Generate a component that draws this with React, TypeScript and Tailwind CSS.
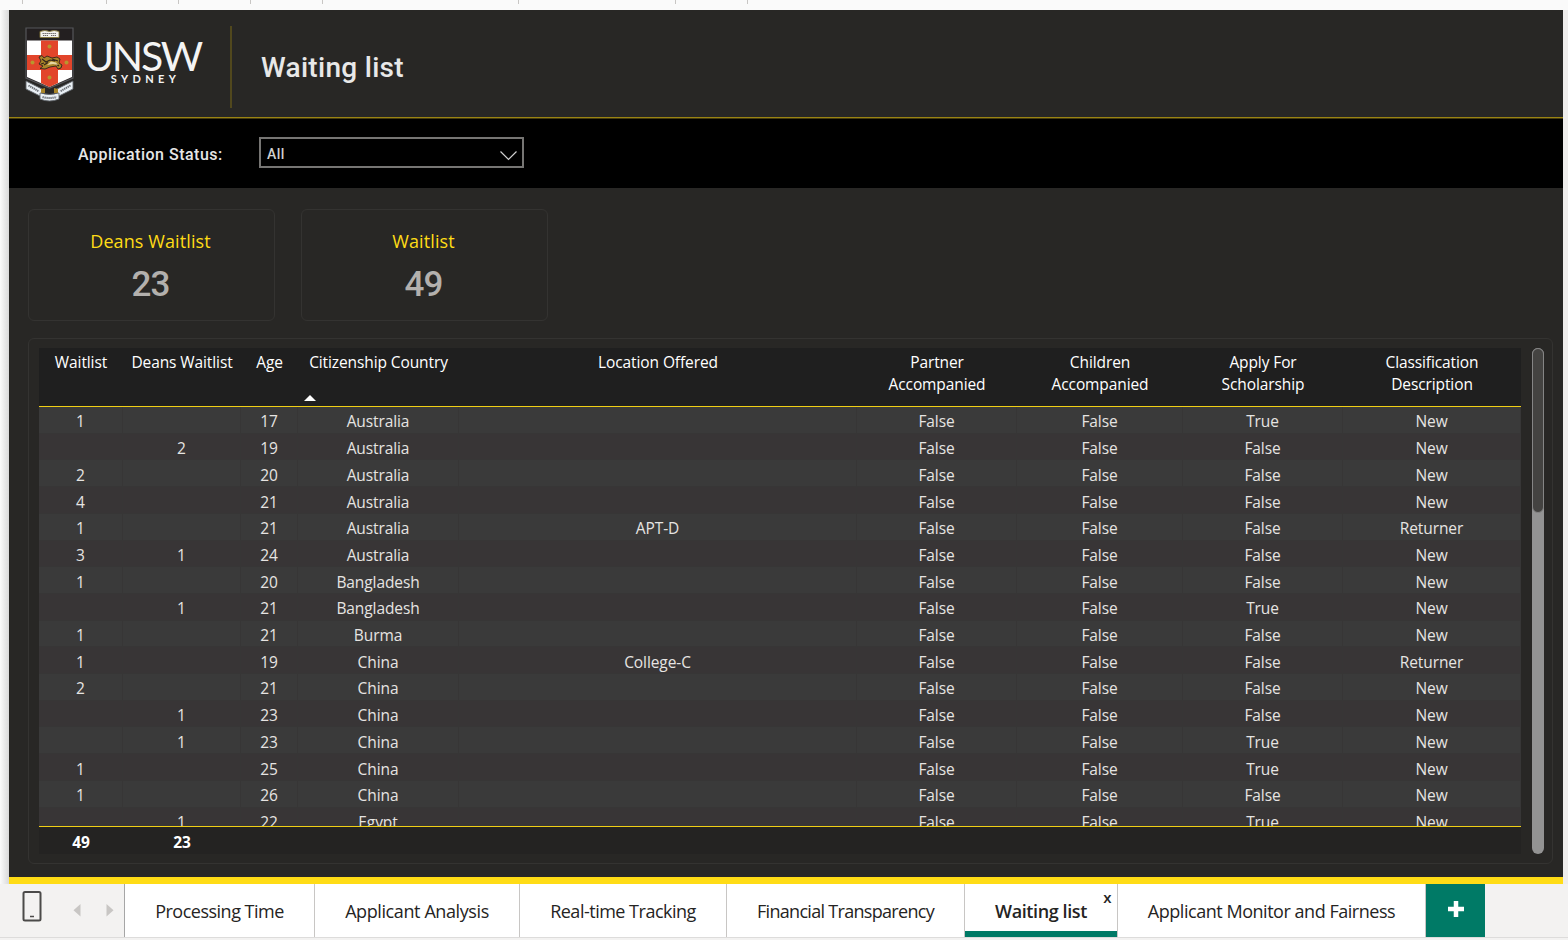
import React from "react";

const columns = [
  { title: "Waitlist", w: "w-[84px]" },
  { title: "Deans Waitlist", w: "w-[118px]" },
  { title: "Age", w: "w-[57px]" },
  { title: "Citizenship Country", w: "w-[161px]", sorted: true },
  { title: "Location Offered", w: "w-[398px]" },
  { title: "Partner\nAccompanied", w: "w-[160px]" },
  { title: "Children\nAccompanied", w: "w-[166px]" },
  { title: "Apply For\nScholarship", w: "w-[160px]" },
  { title: "Classification\nDescription", w: "w-[178px]" },
];

const rows = [
  ["1", "", "17", "Australia", "", "False", "False", "True", "New"],
  ["", "2", "19", "Australia", "", "False", "False", "False", "New"],
  ["2", "", "20", "Australia", "", "False", "False", "False", "New"],
  ["4", "", "21", "Australia", "", "False", "False", "False", "New"],
  ["1", "", "21", "Australia", "APT-D", "False", "False", "False", "Returner"],
  ["3", "1", "24", "Australia", "", "False", "False", "False", "New"],
  ["1", "", "20", "Bangladesh", "", "False", "False", "False", "New"],
  ["", "1", "21", "Bangladesh", "", "False", "False", "True", "New"],
  ["1", "", "21", "Burma", "", "False", "False", "False", "New"],
  ["1", "", "19", "China", "College-C", "False", "False", "False", "Returner"],
  ["2", "", "21", "China", "", "False", "False", "False", "New"],
  ["", "1", "23", "China", "", "False", "False", "False", "New"],
  ["", "1", "23", "China", "", "False", "False", "True", "New"],
  ["1", "", "25", "China", "", "False", "False", "True", "New"],
  ["1", "", "26", "China", "", "False", "False", "False", "New"],
  ["", "1", "22", "Egypt", "", "False", "False", "True", "New"],
];

const tabs = [
  { label: "Processing Time", w: "w-[190px]", track: "tracking-[-0.5px]" },
  { label: "Applicant Analysis", w: "w-[205px]", track: "tracking-[-0.4px]" },
  { label: "Real-time Tracking", w: "w-[207px]", track: "tracking-[-0.5px]" },
  { label: "Financial Transparency", w: "w-[238px]", track: "tracking-[-0.7px]" },
  { label: "Waiting list", w: "w-[153px]", track: "tracking-[-0.4px]", active: true },
  { label: "Applicant Monitor and Fairness", w: "w-[308px]", track: "tracking-[-0.47px]" },
];

function Crest() {
  return (
    <svg width="50" height="76" viewBox="0 0 50 76" className="shrink-0">
      <path d="M1 1H48V51L24.5 61L1 51Z" fill="#231f20" stroke="#55565a" strokeWidth="1.2" />
      <path d="M2 13.5H47V50L24.5 60L2 50Z" fill="#fff" />
      <path d="M16 13.5H33V56L24.5 60L16 56Z" fill="#e2452b" />
      <path d="M2 28H47V43H2Z" fill="#e2452b" />
      <path d="M15 4.5Q20 2.5 24.5 4.5Q29 2.5 34 4.5V10.5H15Z" fill="#f3f1ec" stroke="#857638" strokeWidth="0.9" />
      <path d="M17.5 6.5H31.5M18 8.5H23M26 8.5H31" stroke="#5b5858" strokeWidth="0.9" strokeDasharray="1.4 0.6" fill="none" />
      <g fill="#b8962e">
        <circle cx="24.5" cy="19.5" r="2" />
        <circle cx="7.5" cy="35.5" r="2" />
        <circle cx="41.5" cy="35.5" r="2" />
        <circle cx="24.5" cy="50.5" r="2" />
      </g>
      <path
        d="M14 30L17 28.5L19 31L22 29L27 31L32 30L35 32L34 36L37 38L36 41L33 42L31 39L25 40L20 42L15 41.5L18 39L14 37L16 34Z"
        fill="#a98528"
        stroke="#30241c"
        strokeWidth="0.9"
      />
      <path d="M17 32L21 35L25 33L30 34M19 38L23 35.5M27 32L33 34M16 37L19 36M31 37L34 39" stroke="#30241c" strokeWidth="1.1" fill="none" />
      <path d="M22 38L26 34.5L31 35.5L33 38L28 37Z" fill="#e6d6a2" />
      <path d="M1 54L17 62V70L1 62Z" fill="#e9eff4" stroke="#60646a" strokeWidth="0.9" />
      <path d="M48 54L32 62V70L48 62Z" fill="#e9eff4" stroke="#60646a" strokeWidth="0.9" />
      <path d="M16 62L20 61V66H16ZM33 62L29 61V66H33Z" fill="#a98528" />
      <path d="M15 66Q24.5 69 34 66V72Q24.5 76 15 72Z" fill="#e9eff4" stroke="#60646a" strokeWidth="0.9" />
      <path d="M3.5 58.5L14 64.5M45.5 58.5L35 64.5M17.5 70Q24.5 72 31.5 70" stroke="#6a6e74" strokeWidth="2" strokeDasharray="1.3 0.7" fill="none" />
    </svg>
  );
}

function MetricCard({ title, value }: { title: string; value: string }) {
  return (
    <section className="flex h-[112px] w-[247px] flex-col items-center rounded-md border border-[#343331] pt-[17px] pr-[2px]">
      <h2 className="text-[18px] leading-7 tracking-[0.1px] text-[#ffdc16]">{title}</h2>
      <p className="mt-[9px] font-[Roboto,sans-serif] text-[35px] leading-[42px] font-medium tracking-[-0.8px] text-[#b3b0ad]">{value}</p>
    </section>
  );
}

function WaitlistTable() {
  return (
    <div className="flex h-[506px] w-[1482px] flex-col text-[15.5px] tracking-[-0.1px]">
      <div className="flex h-[58px] shrink-0 bg-[#1f1f1f] text-white">
        {columns.map((c) => (
          <div key={c.title} className={`${c.w} flex shrink-0 flex-col items-center pt-[3px]`}>
            <span className="text-center leading-[22px] whitespace-pre">{c.title}</span>
            {c.sorted && (
              <svg width="12" height="6" className="mt-[22px] ml-[6px] self-start">
                <path d="M0 6L6 0L12 6Z" fill="#fff" />
              </svg>
            )}
          </div>
        ))}
      </div>
      <div className="h-px shrink-0 bg-[#f0cf15]" />
      <div className="h-[419px] shrink-0 overflow-hidden text-[#e6e4e2]">
        {rows.map((row, i) => (
          <div key={i} className="flex h-[26.71px] odd:bg-[#3a3a3a] even:bg-[#383536]">
            {row.map((cell, j) => (
              <div
                key={j}
                className={`${columns[j].w} shrink-0 border-r border-b border-[#373636] pt-[1.4px] text-center leading-[27px]`}
              >
                {cell}
              </div>
            ))}
          </div>
        ))}
      </div>
      <div className="h-px shrink-0 bg-[#f0cf15]" />
      <div className="flex h-[27px] shrink-0 bg-[#242322] text-center leading-[30px] font-bold text-white">
        <div className="w-[84px]">49</div>
        <div className="w-[118px]">23</div>
      </div>
    </div>
  );
}

function PageTabs() {
  return (
    <nav className="flex h-[54px] shrink-0 border-b border-[#dddcdb] bg-[#f3f2f1]">
      <div className="flex h-[53px] w-[125px] border-r border-[#a6a6a6]">
        <svg width="124" height="53">
          <rect x="23.5" y="8" width="17" height="28.5" rx="1.5" fill="none" stroke="#4b4a49" strokeWidth="2" />
          <path d="M30 32.5H34" stroke="#4b4a49" strokeWidth="1.5" />
          <path d="M80.5 20V32.5L73.5 26.25Z" fill="#c8c6c4" />
          <path d="M106.5 20V32.5L113.5 26.25Z" fill="#c8c6c4" />
        </svg>
      </div>
      {tabs.map((t) => (
        <div
          key={t.label}
          className={`${t.w} ${t.track} relative flex h-[53px] items-center justify-center border-r border-[#c8c6c4] bg-white pt-[2px] text-[18px] whitespace-nowrap text-[#252423] ${
            t.active ? "font-semibold" : ""
          }`}
        >
          {t.label}
          {t.active && (
            <>
              <span className="absolute top-[3px] right-[6px] text-[15px] leading-5">x</span>
              <span className="absolute inset-x-0 bottom-0 h-[6px] bg-[#007a66]" />
            </>
          )}
        </div>
      ))}
      <button className="flex h-[53px] w-[59px] items-center justify-center bg-[#007a66] pb-[3px]">
        <svg width="18" height="18">
          <path d="M9 1V17M1 9H17" stroke="#fff" strokeWidth="4.5" />
        </svg>
      </button>
    </nav>
  );
}

export default function App() {
  return (
    <div className="flex h-[940px] w-[1568px] flex-col overflow-hidden bg-[#f3f2f1] font-['Open_Sans',sans-serif]">
      <div className="h-[10px] shrink-0 bg-[#fafafa]">
        <svg width="1568" height="10">
          <path
            d="M22.5 0V4M106.5 0V4M178.5 0V4M250.5 0V4M322.5 0V4M518.5 0V4M675.5 0V4M747.5 0V4"
            stroke="#c8c6c4"
          />
        </svg>
      </div>
      <div className="flex h-[874px] shrink-0">
        <div className="w-[9px] bg-linear-to-r from-[#fbfbfb] to-[#d9d9d9]" />
        <main className="flex w-[1554px] flex-col border-b-[7px] border-[#ffdc16] bg-[#282725]">
          <header className="flex h-[107px] shrink-0">
            <div className="my-[16px] flex h-[82px] w-[223px] border-r-2 border-[#51481d]">
              <div className="mt-px ml-[15.5px]">
                <Crest />
              </div>
              <div className="ml-[8px] flex w-[120px] flex-col items-center pt-[8px] text-[#f4f4f4]">
                <span className="font-[Lato,sans-serif] text-[41px] leading-[44px] tracking-[-2.2px]">UNSW</span>
                <span className="-mt-[6px] ml-[6px] font-[Lato,sans-serif] text-[11px] leading-[14px] font-bold tracking-[4.4px]">
                  SYDNEY
                </span>
              </div>
            </div>
            <h1 className="ml-[29px] pt-[38px] font-[Roboto,sans-serif] text-[28px] leading-10 font-medium tracking-[0.3px] text-[#e8e8e8]">
              Waiting list
            </h1>
          </header>
          <div className="h-px shrink-0 bg-[#9a8412]" />
          <div className="h-px shrink-0 bg-[#453b10]" />
          <div className="flex h-[69px] shrink-0 items-center bg-black font-[Roboto,sans-serif] text-[#e6e6e6]">
            <label className="ml-[69px] w-[181px] pt-[3px] text-[16px] font-medium tracking-[0.5px]">
              Application Status:
            </label>
            <div className="-mt-[2px] flex h-[31px] w-[265px] items-center justify-between border-2 border-[#767573] pr-[5px] pl-[6px] text-[14px] font-medium">
              <span className="pt-[3px] tracking-[0.4px] text-[#d0d0d0]">All</span>
              <svg width="17" height="10" className="mt-[6px]">
                <path d="M0.5 0.5L8.5 8.5L16.5 0.5" fill="none" stroke="#d0d0d0" strokeWidth="1.2" />
              </svg>
            </div>
          </div>
          <div className="mt-[21px] ml-[19px] flex gap-[26px]">
            <MetricCard title="Deans Waitlist" value="23" />
            <MetricCard title="Waitlist" value="49" />
          </div>
          <section className="mt-[17px] ml-[19px] flex h-[526px] w-[1525px] shrink-0 gap-[11px] rounded-md border border-[#343331] pt-[9px] pl-[10px]">
            <WaitlistTable />
            <div className="h-[506px] w-[12px] rounded-full bg-[#939393]">
              <div className="h-[165px] rounded-full border border-[#858585] bg-[#444341]" />
            </div>
          </section>
        </main>
        <div className="w-[5px] bg-[#eeedec]" />
      </div>
      <PageTabs />
    </div>
  );
}
